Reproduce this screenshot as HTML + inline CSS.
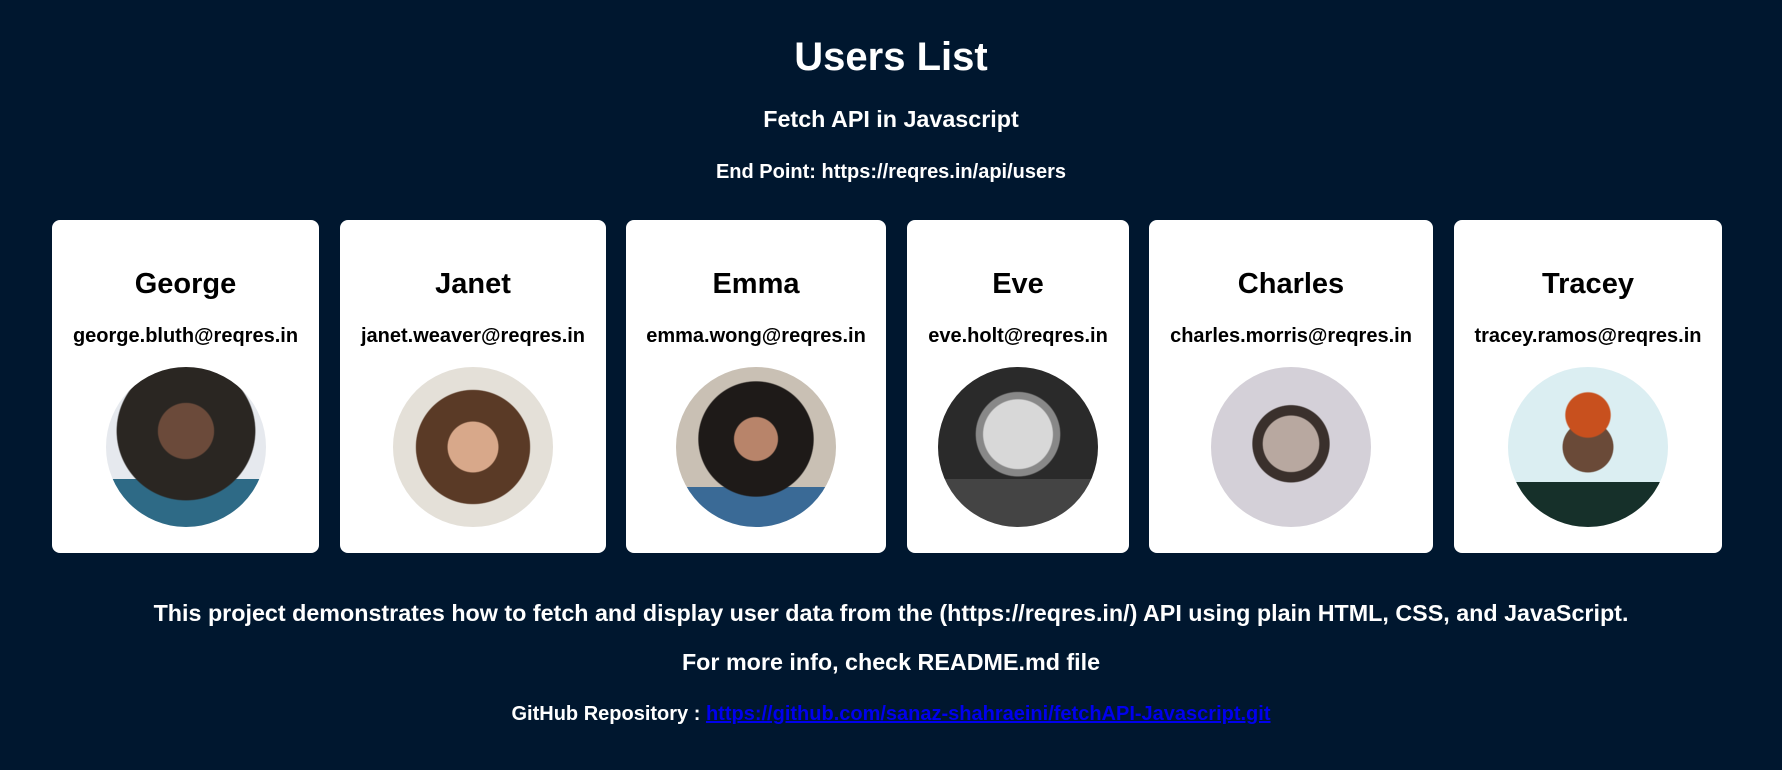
<!DOCTYPE html>
<html><head><meta charset="utf-8"><style>
*{margin:0;padding:0;box-sizing:border-box}
html,body{width:1782px;height:770px;overflow:hidden;background:#00172f;font-family:"Liberation Sans",Arial,sans-serif;color:#fff;font-weight:bold}
.c{position:absolute;left:0;width:1782px;text-align:center;white-space:nowrap}
.card{position:absolute;top:220px;height:333px;background:#fff;border-radius:8px;color:#000;text-align:center}
.card h2{position:absolute;top:48px;left:0;right:0;font-size:29px}
.card p{position:absolute;top:105px;left:0;right:0;font-size:20px;white-space:nowrap}
.av{position:absolute;top:147px;left:50%;margin-left:-80px;width:160px;height:160px;border-radius:50%;overflow:hidden}
a{color:#0000ee}
</style></head><body>
<div class="c" style="top:35px;font-size:40px">Users List</div>
<div class="c" style="top:106px;font-size:23.3px">Fetch API in Javascript</div>
<div class="c" style="top:161px;font-size:20px">End Point: https://reqres.in/api/users</div>

<div class="card" style="left:52px;width:267px"><h2>George</h2><p>george.bluth@reqres.in</p><div class="av" style="background:radial-gradient(circle at 50% 40%,#6b4a3a 0 22%,#2a2622 23% 55%,transparent 56%),linear-gradient(#e6e9ee 0 70%,#2e6a86 70%)"></div></div>
<div class="card" style="left:340px;width:266px"><h2>Janet</h2><p>janet.weaver@reqres.in</p><div class="av" style="background:radial-gradient(circle at 50% 50%,#d8a88a 0 22%,#5a3a26 23% 50%,transparent 51%),#e4e0d8"></div></div>
<div class="card" style="left:626px;width:260px"><h2>Emma</h2><p>emma.wong@reqres.in</p><div class="av" style="background:radial-gradient(circle at 50% 45%,#b8846a 0 18%,#1e1a18 19% 48%,transparent 49%),linear-gradient(#c9c0b4 0 75%,#3a6a96 75%)"></div></div>
<div class="card" style="left:907px;width:222px"><h2>Eve</h2><p>eve.holt@reqres.in</p><div class="av" style="background:radial-gradient(circle at 50% 42%,#d8d8d8 0 28%,#888 29% 34%,transparent 35%),linear-gradient(#2a2a2a 0 70%,#444 70%)"></div></div>
<div class="card" style="left:1149px;width:284px"><h2>Charles</h2><p>charles.morris@reqres.in</p><div class="av" style="background:radial-gradient(circle at 50% 48%,#b8a8a0 0 24%,#3a302c 25% 33%,transparent 34%),#d4d0d8"></div></div>
<div class="card" style="left:1454px;width:268px"><h2>Tracey</h2><p>tracey.ramos@reqres.in</p><div class="av" style="background:radial-gradient(circle at 50% 30%,#c8501e 0 16%,transparent 17%),radial-gradient(circle at 50% 50%,#6a4a38 0 22%,transparent 23%),linear-gradient(#dbeef2 0 72%,#16302a 72%)"></div></div>

<div class="c" style="top:600px;font-size:23.3px">This project demonstrates how to fetch and display user data from the (https://reqres.in/) API using plain HTML, CSS, and JavaScript.</div>
<div class="c" style="top:649px;font-size:23.3px">For more info, check README.md file</div>
<div class="c" style="top:703px;font-size:20px">GitHub Repository : <a href="#">https://github.com/sanaz-shahraeini/fetchAPI-Javascript.git</a></div>
</body></html>
